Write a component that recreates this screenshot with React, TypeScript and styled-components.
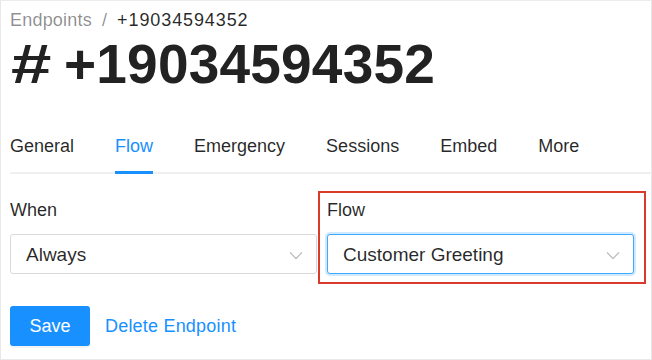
import React from "react";
import styled, { createGlobalStyle } from "styled-components";

const Global = createGlobalStyle`
  html, body { margin: 0; padding: 0; background: #fff; }
  body { font-family: "Liberation Sans", Arial, sans-serif; }
  * { box-sizing: border-box; }
`;

const Frame = styled.div`
  width: 652px;
  height: 360px;
  border: 1px solid #e8e8e8;
  border-top-color: #ececec;
  padding: 7px 0 0 9px;
  overflow: hidden;
  color: rgba(0, 0, 0, 0.85);
`;

const Breadcrumb = styled.div`
  display: flex;
  gap: 10px;
  font-size: 18px;
  line-height: 24px;
  color: rgba(0, 0, 0, 0.45);
`;

const Crumb = styled.span<{ $current?: boolean }>`
  color: ${(p) => (p.$current ? "rgba(0,0,0,0.85)" : "rgba(0,0,0,0.45)")};
  letter-spacing: ${(p) => (p.$current ? "0.9px" : "0.2px")};
`;

const Title = styled.h1`
  margin: 0;
  font-size: 55px;
  line-height: 64px;
  font-weight: 700;
  color: #222;
  display: flex;
  letter-spacing: 0.2px;
`;

const Hash = styled.span`
  display: inline-block;
  width: 53px;
  transform: scaleX(1.32);
  transform-origin: 0 50%;
  margin-left: 1px;
`;

const TabBar = styled.div`
  display: flex;
  gap: 41px;
  padding-top: 38px;
  border-bottom: 2px solid #f0f0f0;
  margin-right: -2px;
`;

const Tab = styled.div<{ $active?: boolean }>`
  position: relative;
  font-size: 18px;
  line-height: 24px;
  padding-bottom: 14px;
  color: ${(p) => (p.$active ? "#1890ff" : "rgba(0,0,0,0.85)")};
  &::after {
    content: "";
    display: ${(p) => (p.$active ? "block" : "none")};
    position: absolute;
    left: 0;
    right: 0;
    bottom: -2px;
    height: 3px;
    background: #1890ff;
  }
`;

const Form = styled.div`
  display: grid;
  grid-template-columns: 317px 317px;
  padding-top: 24px;
`;

const Field = styled.div`
  position: relative;
  padding-right: 10px;
`;

const Highlight = styled.div`
  position: absolute;
  left: -9px;
  top: -7px;
  right: -2px;
  bottom: -10px;
  border: 2px solid #d93a2b;
  pointer-events: none;
`;

const Label = styled.div`
  font-size: 18px;
  line-height: 24px;
  color: rgba(0, 0, 0, 0.85);
  margin-bottom: 12px;
`;

const Select = styled.div<{ $focused?: boolean }>`
  height: 40px;
  display: flex;
  align-items: center;
  justify-content: space-between;
  padding: 2px 13px 0 15px;
  border: 1px solid ${(p) => (p.$focused ? "#40a9ff" : "#d9d9d9")};
  border-radius: 3px;
  box-shadow: ${(p) => (p.$focused ? "0 0 0 2px rgba(24,144,255,0.2)" : "none")};
  font-size: 19px;
  color: rgba(0, 0, 0, 0.85);
  background: #fff;
`;

const Chevron = () => (
  <svg width="14" height="9" viewBox="0 0 14 9" fill="none">
    <path d="M1 1.5 L7 7.5 L13 1.5" stroke="#bfbfbf" strokeWidth="1.3" />
  </svg>
);

const Actions = styled.div`
  display: flex;
  align-items: center;
  gap: 15px;
  padding-top: 32px;
`;

const PrimaryButton = styled.button`
  width: 80px;
  height: 40px;
  border: none;
  border-radius: 3px;
  background: #1890ff;
  color: #fff;
  font-family: inherit;
  font-size: 18px;
  padding: 0;
  box-shadow: 0 2px 0 rgba(0, 0, 0, 0.045);
`;

const LinkButton = styled.span`
  color: #1890ff;
  font-size: 18px;
  letter-spacing: 0.2px;
`;

export default function App() {
  return (
    <>
      <Global />
      <Frame>
        <Breadcrumb>
          <Crumb>Endpoints</Crumb>
          <Crumb>/</Crumb>
          <Crumb $current>+19034594352</Crumb>
        </Breadcrumb>
        <Title>
          <Hash>#</Hash>
          <span>+19034594352</span>
        </Title>
        <TabBar>
          <Tab>General</Tab>
          <Tab $active>Flow</Tab>
          <Tab>Emergency</Tab>
          <Tab>Sessions</Tab>
          <Tab>Embed</Tab>
          <Tab>More</Tab>
        </TabBar>
        <Form>
          <Field>
            <Label>When</Label>
            <Select>
              <span>Always</span>
              <Chevron />
            </Select>
          </Field>
          <Field>
            <Highlight />
            <Label>Flow</Label>
            <Select $focused>
              <span>Customer Greeting</span>
              <Chevron />
            </Select>
          </Field>
        </Form>
        <Actions>
          <PrimaryButton>Save</PrimaryButton>
          <LinkButton>Delete Endpoint</LinkButton>
        </Actions>
      </Frame>
    </>
  );
}
